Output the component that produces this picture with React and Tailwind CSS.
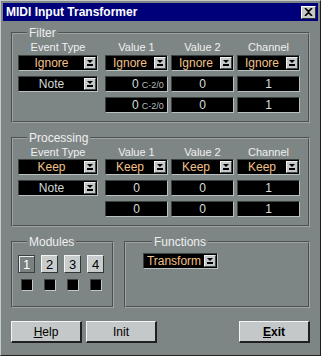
import React from 'react';

const font = { fontFamily: '"Liberation Sans", Arial, sans-serif' };

function Arrow() {
  return (
    <span className="flex h-[12px] w-[12px] shrink-0 items-center justify-center border-t border-l border-t-[#f0f0f0] border-l-[#f0f0f0] border-r border-b border-r-[#404848] border-b-[#404848] bg-[#c4c8c8]">
      <svg width="8" height="8" viewBox="0 0 8 8">
        <path d="M1 1h6L4 4z" fill="#000" />
        <rect x="1" y="5" width="6" height="2" fill="#000" />
      </svg>
    </span>
  );
}

function Drop({ text, color = 'text-[#f2c08a]', w = 'w-[63px]' }) {
  return (
    <div className={`${w} flex h-[16px] items-center border-t border-l border-t-[#3c4242] border-l-[#3c4242] border-r border-b border-r-[#b8c0c0] border-b-[#b8c0c0] bg-black pr-[1px]`}>
      <span className={`flex-1 text-center text-[12px] leading-none ${color}`}>{text}</span>
      <Arrow />
    </div>
  );
}

function Num({ text, note }) {
  return (
    <div className="flex h-[16px] w-[63px] items-center overflow-hidden border-t border-l border-t-[#3c4242] border-l-[#3c4242] border-r border-b border-r-[#b8c0c0] border-b-[#b8c0c0] bg-black">
      {note ? (
        <span className="flex items-baseline whitespace-nowrap pl-[26px] text-[12px] leading-none text-[#d8dcdc]">
          {text}
          <span className="ml-[3px] text-[9px] text-[#b8bcbc]">{note}</span>
        </span>
      ) : (
        <span className="flex-1 text-center text-[12px] leading-none text-[#d8dcdc]">{text}</span>
      )}
    </div>
  );
}

function Group({ label, className = '', children }) {
  return (
    <fieldset className={`border-2 border-[#9ca4a4] [border-style:groove] ${className}`}>
      <legend className="ml-[9px] px-[2px] text-[12px] leading-[14px] text-[#eef0f0]">{label}</legend>
      {children}
    </fieldset>
  );
}

function Headers() {
  return (
    <div className="grid h-[14px] grid-cols-[87px_66px_66px_63px] text-[11px] leading-[14px] text-[#eef0f0]">
      <span className="w-[80px] text-center">Event Type</span>
      <span className="w-[63px] text-center">Value 1</span>
      <span className="w-[63px] text-center">Value 2</span>
      <span className="w-[63px] text-center">Channel</span>
    </div>
  );
}

function Row({ children }) {
  return <div className="grid grid-cols-[87px_66px_66px_63px]">{children}</div>;
}

function Btn({ children, bold, className = '' }) {
  return (
    <button
      className={`flex h-[22px] w-[71px] items-center justify-center border-t border-l border-t-[#f4f4f4] border-l-[#f4f4f4] border-r-2 border-b-2 border-r-[#202020] border-b-[#202020] bg-[#c4c8c8] text-[12px] leading-none text-black ${bold ? 'font-bold' : ''} ${className}`}
    >
      {children}
    </button>
  );
}

function Module({ n, active }) {
  return (
    <div className="flex flex-col items-center gap-[6px]">
      <div
        className={`flex h-[18px] w-[17px] items-center justify-center border text-[13px] leading-none ${
          active
            ? 'border-[#3a4040] bg-[#788080] text-white shadow-[inset_1px_1px_0_#e8ecec]'
            : 'border-t-[#f4f4f4] border-l-[#f4f4f4] border-r-[#303636] border-b-[#303636] bg-[#c8cccc] text-black'
        }`}
      >
        {n}
      </div>
      <div className="h-[12px] w-[12px] border-t border-l border-t-[#3c4242] border-l-[#3c4242] border-r border-b border-r-[#c0c8c8] border-b-[#c0c8c8] bg-black" />
    </div>
  );
}

export default function App() {
  return (
    <div
      style={font}
      className="h-[356px] w-[321px] overflow-hidden border-t border-l border-t-[#c4c8c8] border-l-[#c4c8c8] border-r border-b border-r-[#202020] border-b-[#202020] bg-[#7e8585] p-[2px]"
    >
      <div className="flex h-[18px] items-center justify-between bg-[#00007b] pl-[3px] pr-[2px]">
        <span className="text-[12px] font-bold leading-none text-white">MIDI Input Transformer</span>
        <span className="flex h-[13px] w-[15px] items-center justify-center border-t border-l border-t-white border-l-white border-r border-b border-r-[#303030] border-b-[#303030] bg-[#c4c8c8]">
          <svg width="9" height="8" viewBox="0 0 9 8">
            <path d="M1 0l3.5 3.5L8 0M1 8l3.5-3.5L8 8" stroke="#000" strokeWidth="1.6" fill="none" />
          </svg>
        </span>
      </div>

      <div className="flex flex-col px-[8px] pt-[5px]">
        <Group label="Filter" className="px-[5px] pb-[8px]">
          <Headers />
          <div className="mt-[1px] flex flex-col gap-[5px]">
            <Row>
              <Drop text="Ignore" w="w-[80px]" />
              <Drop text="Ignore" />
              <Drop text="Ignore" />
              <Drop text="Ignore" />
            </Row>
            <Row>
              <Drop text="Note" w="w-[80px]" color="text-[#d4d8d8]" />
              <Num text="0" note="C-2/0" />
              <Num text="0" />
              <Num text="1" />
            </Row>
            <Row>
              <span />
              <Num text="0" note="C-2/0" />
              <Num text="0" />
              <Num text="1" />
            </Row>
          </div>
        </Group>

        <Group label="Processing" className="mt-[8px] px-[5px] pb-[8px]">
          <Headers />
          <div className="flex flex-col gap-[5px]">
            <Row>
              <Drop text="Keep" w="w-[80px]" />
              <Drop text="Keep" />
              <Drop text="Keep" />
              <Drop text="Keep" />
            </Row>
            <Row>
              <Drop text="Note" w="w-[80px]" color="text-[#d4d8d8]" />
              <Num text="0" />
              <Num text="0" />
              <Num text="1" />
            </Row>
            <Row>
              <span />
              <Num text="0" />
              <Num text="0" />
              <Num text="1" />
            </Row>
          </div>
        </Group>

        <div className="mt-[8px] flex gap-[10px]">
          <Group label="Modules" className="h-[73px] w-[103px] px-[5px] pt-[6px]">
            <div className="flex gap-[6px]">
              <Module n="1" active />
              <Module n="2" />
              <Module n="3" />
              <Module n="4" />
            </div>
          </Group>
          <Group label="Functions" className="h-[73px] flex-1 pl-[17px] pt-[4px]">
            <Drop text="Transform" w="w-[75px]" />
          </Group>
        </div>

        <div className="mt-[13px] flex">
          <Btn>
            <span className="underline">H</span>elp
          </Btn>
          <Btn className="ml-[4px]">Init</Btn>
          <Btn bold className="ml-auto">
            <span className="underline">E</span>xit
          </Btn>
        </div>
      </div>
    </div>
  );
}
